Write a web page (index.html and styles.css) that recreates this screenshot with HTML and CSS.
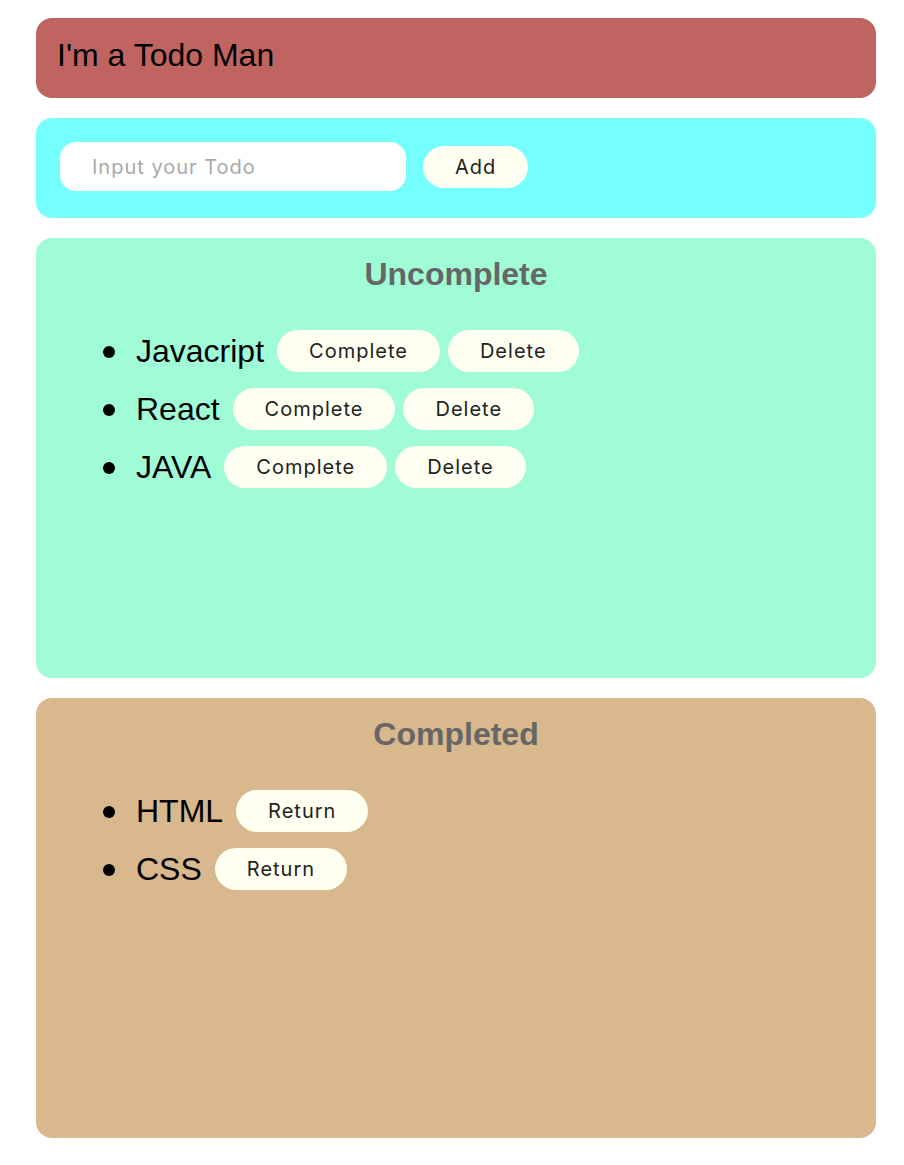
FILE: index.html
```html
<!DOCTYPE html>
<html lang="en">
<head>
<meta charset="utf-8">
<title>Todo</title>
<link rel="stylesheet" href="styles.css">
</head>
<body>
  <div class="card title-card">I'm a Todo Man</div>
  <div class="card input-card">
    <input class="todo-input" type="text" placeholder="Input your Todo">
    <button class="btn">Add</button>
  </div>
  <div class="card list-card uncomplete">
    <p class="list-title">Uncomplete</p>
    <ul class="todo-list">
      <li><span class="todo-text">Javacript</span><button class="btn">Complete</button><button class="btn">Delete</button></li>
      <li><span class="todo-text">React</span><button class="btn">Complete</button><button class="btn">Delete</button></li>
      <li><span class="todo-text">JAVA</span><button class="btn">Complete</button><button class="btn">Delete</button></li>
    </ul>
  </div>
  <div class="card list-card completed">
    <p class="list-title">Completed</p>
    <ul class="todo-list">
      <li><span class="todo-text">HTML</span><button class="btn">Return</button></li>
      <li><span class="todo-text">CSS</span><button class="btn">Return</button></li>
    </ul>
  </div>
</body>
</html>
```
FILE: styles.css
```css
html, body {
  margin: 0;
  padding: 0;
  background: #ffffff;
}
body {
  padding: 18px 28px 0 36px;
  font-family: "Liberation Sans", Arial, sans-serif;
}
.card {
  box-sizing: border-box;
  border-radius: 16px;
  margin-bottom: 20px;
}
.title-card {
  background: #bf6460;
  height: 80px;
  padding: 19px 21px;
  font-size: 32px;
  line-height: 37px;
  color: #000;
}
.input-card {
  background: #74fefe;
  height: 100px;
  padding: 0 24px 3px;
  display: flex;
  align-items: center;
  gap: 17px;
}
.todo-input {
  box-sizing: border-box;
  width: 346px;
  height: 49px;
  border: none;
  border-radius: 16px;
  background: #ffffff;
  padding: 0 32px;
  font-family: Inter, "Noto Sans", sans-serif;
  font-size: 20px;
  letter-spacing: 1px;
  color: #222;
  outline: none;
}
.todo-input::placeholder {
  color: #a9a9a9;
}
.btn {
  box-sizing: border-box;
  height: 42px;
  padding: 0 32px;
  border: none;
  border-radius: 21px;
  background: #fffff2;
  font-family: Inter, "Noto Sans", sans-serif;
  font-size: 20px;
  letter-spacing: 1px;
  color: #222;
  cursor: pointer;
  flex: none;
}
.list-card {
  height: 440px;
  padding: 16px;
}
.uncomplete {
  background: #a0fcd7;
}
.completed {
  background: #d8b88c;
}
.list-title {
  margin: 0;
  text-align: center;
  font-size: 32px;
  line-height: 40px;
  font-weight: bold;
  color: #666666;
}
.todo-list {
  margin: 28px 0 0;
  padding-left: 84px;
  list-style: none;
}
.todo-list li {
  position: relative;
  display: flex;
  align-items: center;
  gap: 8px;
  height: 58px;
  font-size: 32px;
  color: #000;
}
.todo-list li::before {
  content: "";
  position: absolute;
  left: -33px;
  top: 24px;
  width: 12px;
  height: 12px;
  border-radius: 50%;
  background: #000;
}
.todo-text {
  line-height: 37px;
  margin-right: 5px;
}
```
